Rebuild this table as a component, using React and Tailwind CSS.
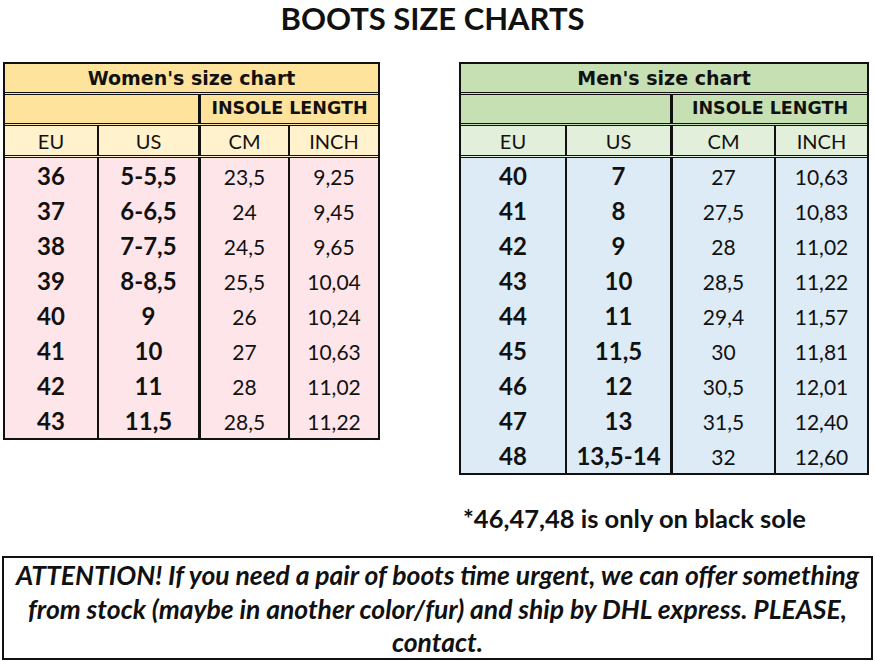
const WOMEN = [
  ['36', '5-5,5', '23,5', '9,25'],
  ['37', '6-6,5', '24', '9,45'],
  ['38', '7-7,5', '24,5', '9,65'],
  ['39', '8-8,5', '25,5', '10,04'],
  ['40', '9', '26', '10,24'],
  ['41', '10', '27', '10,63'],
  ['42', '11', '28', '11,02'],
  ['43', '11,5', '28,5', '11,22'],
]

const MEN = [
  ['40', '7', '27', '10,63'],
  ['41', '8', '27,5', '10,83'],
  ['42', '9', '28', '11,02'],
  ['43', '10', '28,5', '11,22'],
  ['44', '11', '29,4', '11,57'],
  ['45', '11,5', '30', '11,81'],
  ['46', '12', '30,5', '12,01'],
  ['47', '13', '31,5', '12,40'],
  ['48', '13,5-14', '32', '12,60'],
]

function SizeChart({ title, rows, cols, left, head, sub, body }) {
  return (
    <div className={`border-2 border-[#111] ${body}`}>
      {/* title */}
      <div className={`h-[31px] flex items-center justify-center border-b-[3px] border-double border-[#111] ${head} font-['DejaVu_Sans',sans-serif] font-bold text-[19px] leading-none`}>
        {title}
      </div>
      {/* insole length */}
      <div className={`h-[31px] flex border-b-[3px] border-double border-[#111] ${head}`}>
        <div style={{ width: left }} />
        <div className="flex-1 border-l-[3px] border-[#111] flex items-center justify-center font-['DejaVu_Sans',sans-serif] font-bold text-[17.5px] leading-none">
          INSOLE LENGTH
        </div>
      </div>
      {/* column names */}
      <div className={`grid ${cols} h-[32px] border-b-[3px] border-double border-[#111] ${sub} text-[20px]`}>
        <div className="flex items-center justify-center">EU</div>
        <div className="flex items-center justify-center border-l-2 border-[#111]">US</div>
        <div className="flex items-center justify-center border-l-[3px] border-[#111]">CM</div>
        <div className="flex items-center justify-center border-l-2 border-[#111]">INCH</div>
      </div>
      {rows.map(r => (
        <div key={r[0]} className={`grid ${cols} h-[35px]`}>
          <div className="flex items-center justify-center font-bold text-[24px]">{r[0]}</div>
          <div className="flex items-center justify-center border-l-2 border-[#111] font-bold text-[24px]">{r[1]}</div>
          <div className="flex items-center justify-center border-l-[3px] border-[#111] text-[21px] pt-[2px]">{r[2]}</div>
          <div className="flex items-center justify-center border-l-2 border-[#111] text-[21px] pt-[2px]">{r[3]}</div>
        </div>
      ))}
    </div>
  )
}

export default function App() {
  return (
    <div className="w-[875px] h-[661px] bg-white text-[#111] font-['Lato',sans-serif] overflow-hidden">
      <h1 className="h-[36px] flex items-center justify-center font-bold text-[31px] leading-[36px] pr-[10px]">
        BOOTS SIZE CHARTS
      </h1>

      <div className="flex items-start mt-[26px]">
        <div className="ml-[3px] w-[377px]">
          <SizeChart
            title="Women's size chart"
            rows={WOMEN}
            cols="grid-cols-[92px_101px_90px_90px]"
            left={193}
            head="bg-[#fee39c]"
            sub="bg-[#fff2cc]"
            body="bg-[#fde5ea]"
          />
        </div>

        <div className="ml-[79px] w-[410px] flex flex-col">
          <SizeChart
            title="Men's size chart"
            rows={MEN}
            cols="grid-cols-[104px_105px_104px_93px]"
            left={209}
            head="bg-[#c6e0b4]"
            sub="bg-[#e2efda]"
            body="bg-[#ddebf7]"
          />
          <p className="mt-[28px] ml-[4px] h-[30px] flex items-center font-bold text-[25.5px] leading-[30px]">
            *46,47,48 is only on black sole
          </p>
        </div>
      </div>

      <div className="mt-[23px] mx-[2px] h-[104px] border-2 border-[#111] flex flex-col items-center justify-center pt-[3px] font-bold italic text-[26.5px] leading-[33.5px] text-center whitespace-nowrap">
        <span>ATTENTION! If you need a pair of boots time urgent, we can offer something</span>
        <span>from stock (maybe in another color/fur) and ship by DHL express. PLEASE,</span>
        <span>contact.</span>
      </div>
    </div>
  )
}
